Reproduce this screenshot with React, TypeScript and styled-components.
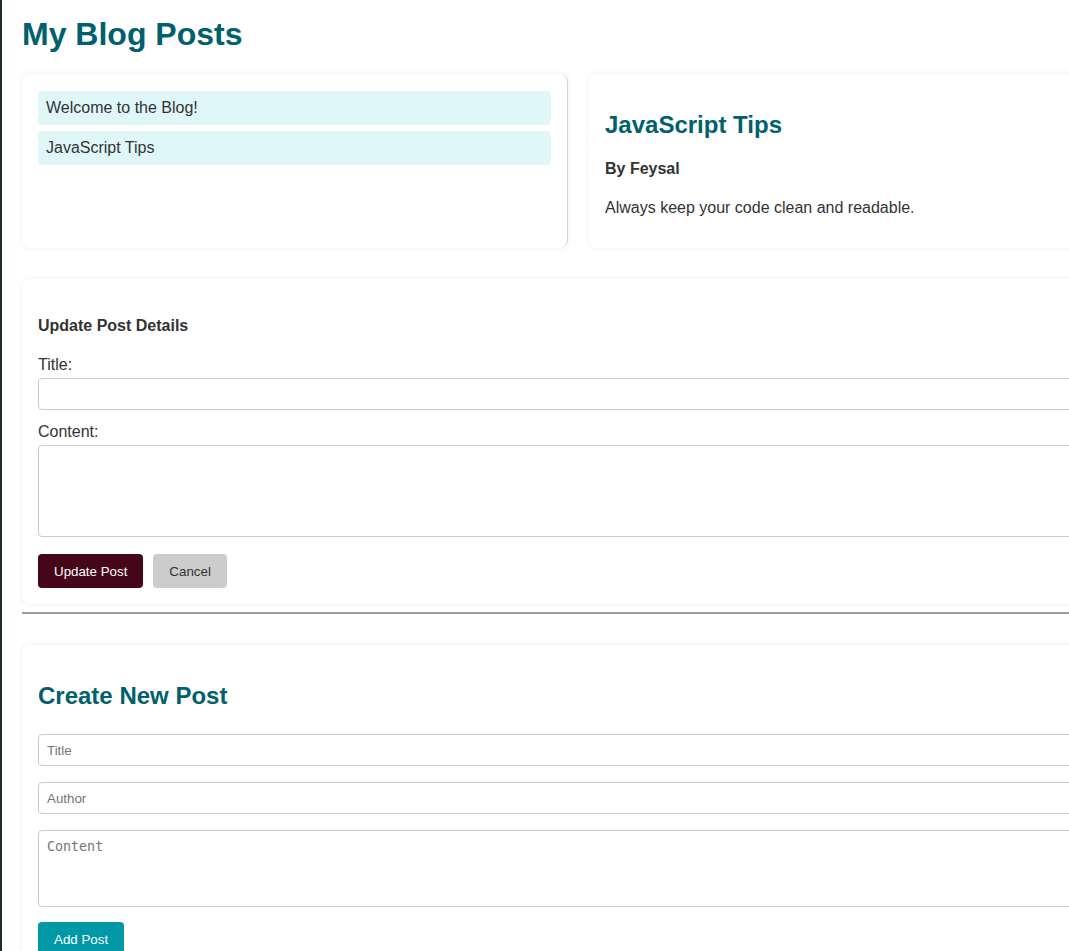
import styled, { createGlobalStyle } from "styled-components";
import type { FC } from "react";

const GlobalStyle = createGlobalStyle`
    html, body {
        margin: 0;
        padding: 0;
        background: #ffffff;
    }
    body {
        font-family: "Liberation Sans", Arial, sans-serif;
        color: #333333;
        border-left: 2px solid #1f2a2e;
        min-height: 100vh;
    }
    * {
        box-sizing: border-box;
    }
`;

const Page = styled.div`
    width: 1153px;
    padding: 0 20px 20px 20px;
`;

const Heading = styled.h1`
    margin: 16px 0 21px 0;
    font-size: 32px;
    line-height: 37px;
    font-weight: 700;
    color: #00606e;
`;

const TopGrid = styled.div`
    display: grid;
    grid-template-columns: 1fr 1fr;
    gap: 21px;
    margin-bottom: 31px;
`;

const Card = styled.section<{ $edge?: boolean }>`
    background: #ffffff;
    border-radius: 8px;
    padding: 16px;
    box-shadow: 0 0 6px rgba(0, 0, 0, 0.08);
    border-right: ${({ $edge }) => ($edge ? "1px solid #d6d6d6" : "none")};
`;

const PostList = styled.ul`
    list-style: none;
    margin: 1px 0 0 0;
    padding: 0;
    display: flex;
    flex-direction: column;
    gap: 6px;
`;

const PostItem = styled.li`
    background: #e0f7fa;
    border-radius: 4px;
    padding: 0 8px;
    height: 34px;
    display: flex;
    align-items: center;
    font-size: 16px;
    cursor: pointer;
`;

const PostTitle = styled.h2`
    margin: 21px 0 0 0;
    font-size: 24px;
    line-height: 28px;
    font-weight: 700;
    color: #00606e;
`;

const Author = styled.h4`
    margin: 21px 0 0 0;
    font-size: 16px;
    line-height: 18px;
    font-weight: 700;
`;

const Body = styled.p`
    margin: 21px 0 15px 0;
    font-size: 16px;
    line-height: 18px;
`;

const FormTitle = styled.h4`
    margin: 22px 0 20px 0;
    font-size: 16px;
    line-height: 18px;
    font-weight: 700;
`;

const Label = styled.label<{ $first?: boolean }>`
    display: block;
    font-size: 16px;
    line-height: 18px;
    padding-top: 1px;
    margin-top: ${({ $first }) => ($first ? "0" : "12px")};
`;

const Field = styled.input<{ $gap?: number }>`
    display: block;
    width: 100%;
    height: 32px;
    margin-top: ${({ $gap }) => $gap ?? 4}px;
    padding: 0 8px;
    border: 1px solid #cccccc;
    border-radius: 4px;
    font-family: "Liberation Sans", Arial, sans-serif;
    font-size: 13.33px;
    color: #333333;
    background: #ffffff;

    &::placeholder {
        color: #757575;
    }
`;

const Area = styled.textarea<{ $height: number; $gap?: number }>`
    display: block;
    width: 100%;
    height: ${({ $height }) => $height}px;
    margin-top: ${({ $gap }) => $gap ?? 4}px;
    padding: 8px;
    border: 1px solid #cccccc;
    border-radius: 4px;
    font-family: "DejaVu Sans Mono", "Liberation Mono", monospace;
    font-size: 13.33px;
    resize: vertical;
    background: #ffffff;

    &::placeholder {
        color: #757575;
    }
`;

const ButtonRow = styled.div<{ $gap: number }>`
    display: flex;
    gap: 10px;
    margin-top: ${({ $gap }) => $gap}px;
`;

const Button = styled.button<{ $variant: "update" | "cancel" | "add" }>`
    height: 34px;
    padding: 0 16px;
    border: none;
    border-radius: 4px;
    font-family: "Liberation Sans", Arial, sans-serif;
    font-size: 13.33px;
    cursor: pointer;
    background: ${({ $variant }) =>
        $variant === "update" ? "#450619" : $variant === "cancel" ? "#cccccc" : "#0097a7"};
    color: ${({ $variant }) => ($variant === "cancel" ? "#333333" : "#ffffff")};
`;

const Divider = styled.hr`
    margin: 8px 0 31px 0;
    border: none;
    border-top: 2px solid #9e9e9e;
`;

const posts = [
    { id: 1, title: "Welcome to the Blog!" },
    { id: 2, title: "JavaScript Tips" },
];

const App: FC = () => {
    return (
        <>
            <GlobalStyle />
            <Page>
                <Heading>My Blog Posts</Heading>
                <TopGrid>
                    <Card $edge>
                        <PostList>
                            {posts.map((post) => (
                                <PostItem key={post.id}>{post.title}</PostItem>
                            ))}
                        </PostList>
                    </Card>
                    <Card>
                        <PostTitle>JavaScript Tips</PostTitle>
                        <Author>By Feysal</Author>
                        <Body>Always keep your code clean and readable.</Body>
                    </Card>
                </TopGrid>

                <Card>
                    <FormTitle>Update Post Details</FormTitle>
                    <Label $first>Title:</Label>
                    <Field type="text" />
                    <Label>Content:</Label>
                    <Area $height={92} />
                    <ButtonRow $gap={17}>
                        <Button $variant="update">Update Post</Button>
                        <Button $variant="cancel">Cancel</Button>
                    </ButtonRow>
                </Card>

                <Divider />

                <Card>
                    <PostTitle>Create New Post</PostTitle>
                    <Field type="text" placeholder="Title" $gap={24} />
                    <Field type="text" placeholder="Author" $gap={16} />
                    <Area placeholder="Content" $height={77} $gap={16} />
                    <ButtonRow $gap={15}>
                        <Button $variant="add">Add Post</Button>
                    </ButtonRow>
                </Card>
            </Page>
        </>
    );
};

export default App;
